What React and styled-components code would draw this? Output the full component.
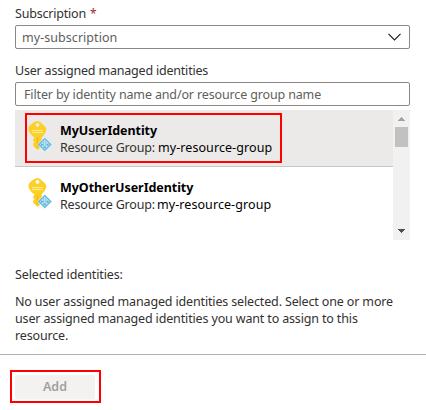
import React from "react";
import styled, { createGlobalStyle } from "styled-components";

const GlobalStyle = createGlobalStyle`
  * { box-sizing: border-box; }
  body {
    margin: 0;
    background: #fff;
    color: #323130;
    font: 12.5px/17px "Noto Sans", "Open Sans", sans-serif;
    letter-spacing: -0.15px;
  }
`;

const Panel = styled.main`
  display: flex;
  flex-direction: column;
  width: 426px;
  height: 410px;
  overflow: hidden;
`;

const Content = styled.section`
  display: flex;
  flex-direction: column;
  height: 354px;
  padding: 5px 16px 0 15px;
`;

const Label = styled.label`
  display: block;
  height: 20px;
  letter-spacing: -0.2px;
`;

const Required = styled.span`
  color: #a4262c;
  margin-left: 1px;
  font-size: 12px;
`;

const Select = styled.div`
  display: flex;
  align-items: center;
  justify-content: space-between;
  height: 24px;
  margin-bottom: 13px;
  padding: 0 8px 0 6px;
  border: 1px solid #8a8886;
  border-radius: 2px;
  color: #605e5c;
  letter-spacing: 0.05px;
`;

const FilterInput = styled.input`
  width: 100%;
  height: 24px;
  padding: 0 8px;
  border: 1px solid #8a8886;
  border-radius: 2px;
  outline: none;
  font: inherit;
  letter-spacing: -0.14px;
  &::placeholder { color: #605e5c; opacity: 1; }
`;

const ListBox = styled.div`
  display: flex;
  height: 130px;
  margin-top: 4px;
`;

const Rows = styled.div`
  flex: 1;
`;

const Row = styled.div`
  height: 57px;
  padding: 3px 0 0 10px;
  background: ${(p) => (p.$selected ? "#ebeae9" : "#fff")};
  border-bottom: 1px solid ${(p) => (p.$selected ? "#c8c6c4" : "transparent")};
`;

const RowBody = styled.div`
  display: flex;
  width: 257px;
  height: 50px;
  padding: 6px 0 0 1px;
  border: 2px solid ${(p) => (p.$selected ? "#ff0000" : "transparent")};
`;

const RowText = styled.div`
  margin-left: 8px;
  padding-top: 1px;
  white-space: nowrap;
`;

const Name = styled.div`
  color: #000;
  font-weight: 700;
  letter-spacing: -0.05px;
`;

const Detail = styled.div`
  display: flex;
  letter-spacing: -0.18px;
`;

const Group = styled.span`
  margin-left: ${(p) => (p.$selected ? "3px" : "2px")};
  color: #000;
  letter-spacing: 0.08px;
`;

const Scrollbar = styled.div`
  display: flex;
  flex-direction: column;
  align-items: center;
  width: 17px;
  padding: 7px 0;
  background: #f1f1f1;
`;

const Thumb = styled.div`
  width: 13px;
  height: 20px;
  margin: 6px 0 auto;
  background: #c1c1c1;
`;

const SelectedTitle = styled.div`
  margin-top: 26px;
  letter-spacing: -0.12px;
`;

const Message = styled.p`
  margin: 10px 0 0;
  white-space: pre-line;
`;

const Footer = styled.footer`
  flex: 1;
  padding: 15px 10px 0;
  border-top: 1px solid #b3b0ad;
`;

const Highlight = styled.div`
  width: 91px;
  height: 33px;
  padding: 3px;
  border: 2px solid #ff0000;
`;

const AddButton = styled.button`
  display: block;
  width: 80px;
  height: 24px;
  padding: 0 0 2px;
  border: 0;
  border-radius: 2px;
  background: #f3f2f1;
  color: #a19f9d;
  font: inherit;
  font-weight: 600;
  letter-spacing: 0;
`;

function ChevronIcon() {
  return (
    <svg width="13" height="8" viewBox="0 0 13 8" fill="none">
      <path d="M0.5 0.8 6.5 6.8 12.5 0.8" stroke="#201f1e" strokeWidth="1.2" />
    </svg>
  );
}

function Arrow({ down }) {
  return (
    <svg width="7" height="4" viewBox="0 0 7 4" shapeRendering="crispEdges">
      {down ? (
        <path d="M0 0h7v1H6v1H5v1H4v1H3V3H2V2H1V1H0z" fill="#505050" />
      ) : (
        <path d="M0 4h7V3H6V2H5V1H4V0H3v1H2v1H1v1H0z" fill="#a3a3a3" />
      )}
    </svg>
  );
}

function IdentityIcon() {
  return (
    <svg width="24" height="31" viewBox="0 0 24 31">
      <path
        fill="#fcd028"
        fillRule="evenodd"
        d="M9.500 0C11.500 0 17.900 5 18.300 8c.2 2-1.500 5.500-4.500 8.200V25l-4.100 4-4.600-4.200v-2.200l1.500-1.400-1.500-1.400v-1.500l1.500-1.400-1.500-1.400C2 12.800 0 9.600.4 7.200.8 4.300 7 0 9.500 0ZM9.500 2a1.900 1.900 0 1 0 0 3.800 1.900 1.900 0 0 0 0-3.800Z"
      />
      <path fill="#f4b51e" d="M8.800 17h1.300v9.500H8.800z" />
      <path stroke="#ffec94" strokeWidth="1" d="M4 9.500h11M4 11.500h11" />
      <path fill="#e4f2f8" d="m16.800 16 7.200 7.500-7.200 7.500-7.600-7.500z" />
      <path fill="#62b9dc" d="m16.800 16.700 6.900 6.800-6.900 6.800-6.900-6.800z" />
      <path fill="#d3edf7" d="m16.800 18.600 4.900 4.900-4.900 4.900-4.900-4.900z" />
      <path
        fill="none"
        stroke="#6cc0e0"
        strokeWidth="0.9"
        d="M15.800 19.800v7.400M17.800 19.800v7.400"
      />
      <g fill="#51addb">
        <circle cx="13.900" cy="23.700" r="1.100" />
        <circle cx="19.700" cy="23.700" r="1.100" />
        <circle cx="16.800" cy="26.500" r="0.900" />
      </g>
    </svg>
  );
}

const identities = [
  { name: "MyUserIdentity", selected: true },
  { name: "MyOtherUserIdentity", selected: false },
];

export default function App() {
  return (
    <>
      <GlobalStyle />
      <Panel>
        <Content>
          <Label>
            Subscription <Required>*</Required>
          </Label>
          <Select>
            <span>my-subscription</span>
            <ChevronIcon />
          </Select>
          <Label htmlFor="identity-filter">User assigned managed identities</Label>
          <FilterInput
            id="identity-filter"
            placeholder="Filter by identity name and/or resource group name"
          />
          <ListBox>
            <Rows>
              {identities.map(({ name, selected }) => (
                <Row key={name} $selected={selected}>
                  <RowBody $selected={selected}>
                    <IdentityIcon />
                    <RowText>
                      <Name>{name}</Name>
                      <Detail>
                        Resource Group:
                        <Group $selected={selected}>my-resource-group</Group>
                      </Detail>
                    </RowText>
                  </RowBody>
                </Row>
              ))}
            </Rows>
            <Scrollbar>
              <Arrow />
              <Thumb />
              <Arrow down />
            </Scrollbar>
          </ListBox>
          <SelectedTitle>Selected identities:</SelectedTitle>
          <Message>
            {"No user assigned managed identities selected. Select one or more\nuser assigned managed identities you want to assign to this\nresource."}
          </Message>
        </Content>
        <Footer>
          <Highlight>
            <AddButton disabled>Add</AddButton>
          </Highlight>
        </Footer>
      </Panel>
    </>
  );
}
